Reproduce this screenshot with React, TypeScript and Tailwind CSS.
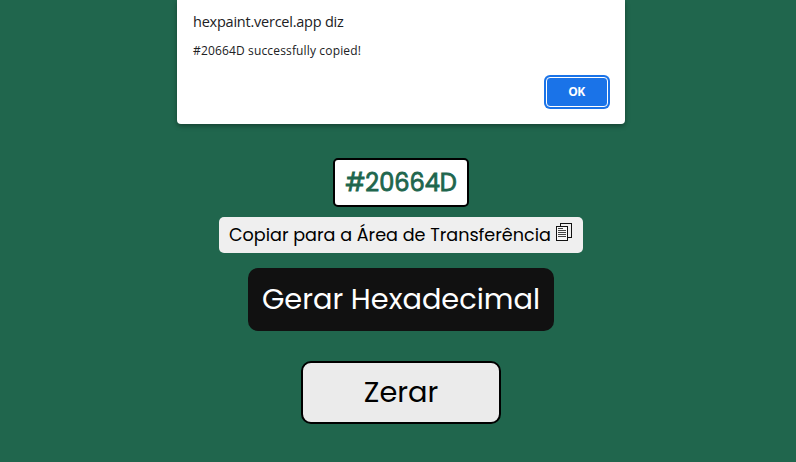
const geometric = "font-['Poppins','Inter',sans-serif] whitespace-nowrap";

function CopyIcon() {
  return (
    <svg className="mb-[7px] ml-[4px] h-[20px] w-[17px] shrink-0" viewBox="0 0 17 20" fill="none" shapeRendering="crispEdges">
      <path d="M5.5 4V1.5H16.5V15.5H13" stroke="#111" />
      <path d="M1.5 4.5H12.5V18.5H1.5Z" fill="#f8f8f8" stroke="#111" />
      <path d="M3 6.5H8M3 8.5H11M3 10.5H11M3 12.5H11M3 14.5H11" stroke="#444" />
    </svg>
  );
}

function AlertDialog() {
  return (
    <section
      role="alertdialog"
      className="ml-[177px] flex h-[124px] w-[448px] flex-col rounded-b-[4px] bg-white px-4 pt-3 font-['Open_Sans',sans-serif] text-[#202124] shadow-[0_2px_5px_rgba(0,0,0,0.35)]"
    >
      <h1 className="h-5 text-[14.5px] leading-5 whitespace-nowrap">
        <span className="tracking-[-0.23px]">hexpaint.vercel.app diz</span>
      </h1>
      <p className="mt-[11px] h-4 text-[12px] leading-4 whitespace-nowrap">
        <span className="tracking-[0.15px]">#20664D successfully copied!</span>
      </p>
      <button className="mt-[18px] mr-[1px] flex h-[30px] w-[62px] items-center justify-center self-end rounded-[4px] border border-white bg-[#1a73e8] pr-[1px] text-[12px] font-bold tracking-[-0.4px] text-white ring-2 ring-[#1a73e8]">
        OK
      </button>
    </section>
  );
}

export default function App() {
  return (
    <main className="h-[462px] overflow-hidden bg-[#20664d]">
      <AlertDialog />
      <div className={`flex flex-col items-center pt-[34px] pl-1.5 ${geometric}`}>
        <div className="flex h-[49px] w-[136px] items-center justify-center rounded-[5px] border-2 border-black bg-white text-[24px] text-[#20664d] [-webkit-text-stroke:0.8px_#20664d]">
          <span>#20664D</span>
        </div>
        <button className="mt-[10px] flex h-9 w-[364px] items-center rounded-[5px] bg-[#efefef] pt-px pl-[10px] text-[17.6px] text-black">
          <span>Copiar para a Área de Transferência</span>
          <CopyIcon />
        </button>
        <button className="mt-[15px] flex h-[63px] w-[306px] items-center justify-center rounded-[10px] bg-[#111] text-[28.8px] text-white">
          <span>Gerar Hexadecimal</span>
        </button>
        <button className="mt-[30px] flex h-[63px] w-[200px] items-center justify-center rounded-[10px] border-2 border-black bg-[#ebebeb] text-[28.8px] text-black">
          <span>Zerar</span>
        </button>
      </div>
    </main>
  );
}
